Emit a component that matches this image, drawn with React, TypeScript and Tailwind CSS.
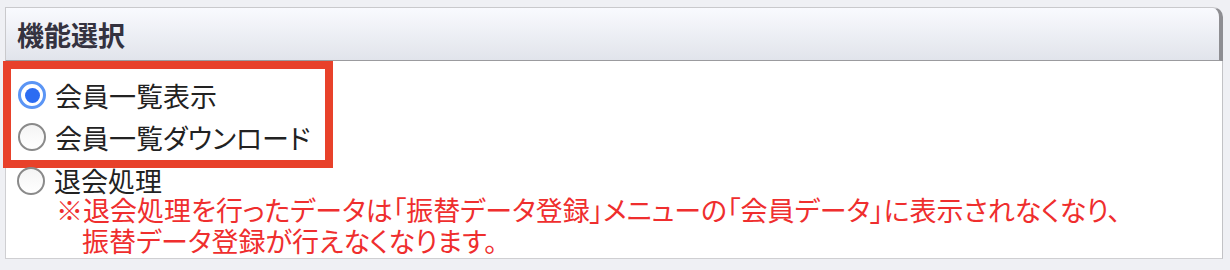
const font = "[font-family:'Noto_Sans_CJK_JP','Noto_Sans_CJK_SC',sans-serif]";

function Radio({ checked }: { checked?: boolean }) {
  if (checked) {
    return (
      <span className="flex h-[28px] w-[28px] shrink-0 items-center justify-center rounded-full border-[3px] border-[#5b95f5] bg-white">
        <span className="h-[15px] w-[15px] rounded-full bg-[#2c6cf2]" />
      </span>
    );
  }
  return (
    <span className="h-[28px] w-[28px] shrink-0 rounded-full border-[2px] border-[#8a8a8a] bg-gradient-to-b from-[#f4f4f4] to-white" />
  );
}

function Option({ label, checked }: { label: string; checked?: boolean }) {
  return (
    <label className="flex h-[42px] items-center gap-[9px] text-[27px] leading-none text-[#222] [font-feature-settings:'palt']">
      <Radio checked={checked} />
      <span>{label}</span>
    </label>
  );
}

export default function App() {
  return (
    <div className={`h-[270px] w-[1230px] bg-[#eff0f4] pl-[5px] pr-[7px] pt-[7px] ${font}`}>
      <div className="h-[55px] rounded-tr-[10px] border border-b-[2px] border-r-[4px] border-[#c9c9cc] border-b-[#9b9b9e] border-r-[#8e8e92] bg-gradient-to-b from-[#f9fafe] to-[#e1e4eb] pl-[11px] flex items-center">
        <span className="text-[27px] font-bold leading-none text-[#34323f]">機能選択</span>
      </div>
      <div className="h-[198px] border border-t-0 border-[#cfcfd2] border-r-[#c2c2c5] bg-white">
        <div className="-ml-[3px] -mt-[1px] h-[107px] w-[330px] border-[8px] border-[#e8412a] pl-[7px] pt-[5px]">
          <Option label="会員一覧表示" checked />
          <Option label="会員一覧ダウンロード" />
        </div>
        <div className="pl-[11px]">
          <label className="flex h-[26px] items-center gap-[9px] text-[27px] leading-[24px] text-[#222]">
            <Radio />
            <span>退会処理</span>
          </label>
          <div className="pl-[39px] text-[27px] leading-[31px] text-[#ef2e2e] [font-feature-settings:'palt']">
            <div>※退会処理を行ったデータは「振替データ登録」メニューの「会員データ」に表示されなくなり、</div>
            <div className="pl-[26px]">振替データ登録が行えなくなります。</div>
          </div>
        </div>
      </div>
    </div>
  );
}
